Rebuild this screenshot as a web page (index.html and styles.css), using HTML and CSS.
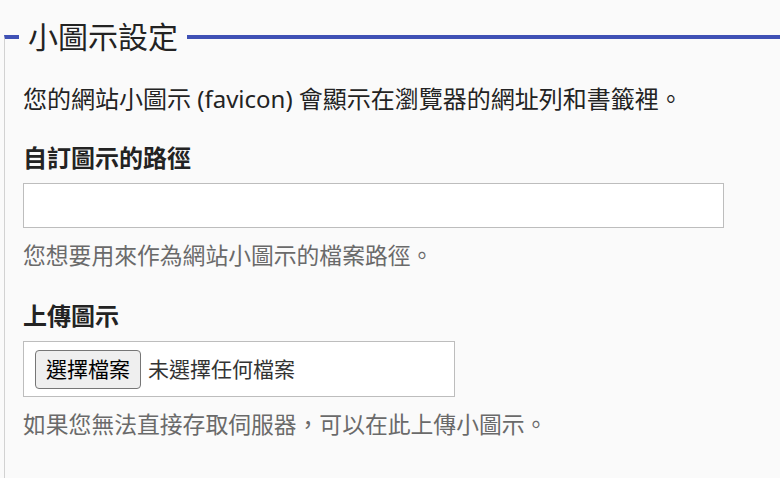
FILE: index.html
```html
<!DOCTYPE html>
<html lang="zh-Hant">
<head>
    <meta charset="UTF-8">
    <meta name="viewport" content="width=device-width, initial-scale=1.0">
    <title>小圖示設定</title>
    <link rel="stylesheet" href="styles.css">
</head>
<body>
    <fieldset class="settings-group">
        <legend>小圖示設定</legend>

        <p class="intro">您的網站小圖示 (favicon) 會顯示在瀏覽器的網址列和書籤裡。</p>

        <div class="form-item">
            <label for="favicon-path">自訂圖示的路徑</label>
            <input type="text" id="favicon-path" class="text-input">
            <div class="description">您想要用來作為網站小圖示的檔案路徑。</div>
        </div>

        <div class="form-item">
            <label>上傳圖示</label>
            <div class="file-picker">
                <button type="button" class="file-button">選擇檔案</button>
                <span class="file-name">未選擇任何檔案</span>
            </div>
            <div class="description">如果您無法直接存取伺服器，可以在此上傳小圖示。</div>
        </div>
    </fieldset>
</body>
</html>
```

FILE: styles.css
```css
:root {
    --accent-color: #3f51b5;
    --text-color: #232323;
    --muted-color: #6a6a6a;
    --border-color: #bdbdbd;
    --background-color: #fafafa;
}

html, body {
    margin: 0;
    padding: 0;
    overflow: hidden;
}

body {
    font-family: "Noto Sans", "Noto Sans CJK TC", sans-serif;
    font-size: 24px;
    line-height: 36px;
    color: var(--text-color);
    background-color: var(--background-color);
}

.settings-group {
    margin: 15px 0 0 4px;
    padding: 22px 18px 40px 18px;
    border: none;
    border-top: 4px solid var(--accent-color);
    border-left: 1px solid #d2d2d2;
    min-width: 0;
}

.settings-group legend {
    font-size: 30px;
    line-height: 44px;
    padding: 0 9px;
    margin-left: -4px;
    font-weight: normal;
}

.intro {
    margin: 0 0 23px 0;
}

.form-item {
    margin-bottom: 25px;
}

.form-item label {
    display: block;
    font-weight: bold;
    margin-bottom: 7px;
}

.text-input {
    display: block;
    box-sizing: border-box;
    width: 701px;
    height: 45px;
    margin: 0;
    border: 1px solid var(--border-color);
    background-color: white;
    font-size: 21px;
    padding: 0 10px;
}

.description {
    margin-top: 11px;
    font-size: 22.8px;
    line-height: 34px;
    color: var(--muted-color);
}

.file-picker {
    display: flex;
    align-items: center;
    box-sizing: border-box;
    width: 432px;
    height: 56px;
    padding: 0 11px;
    border: 1px solid var(--border-color);
    background-color: white;
    font-size: 21px;
}

.file-button {
    font-family: inherit;
    font-size: 21px;
    height: 39px;
    padding: 0 10px;
    margin: 0 7px 0 0;
    color: black;
    background-color: #efefef;
    border: 1px solid #767676;
    border-radius: 4px;
    line-height: 1;
}

.file-name {
    color: #333;
}
```
